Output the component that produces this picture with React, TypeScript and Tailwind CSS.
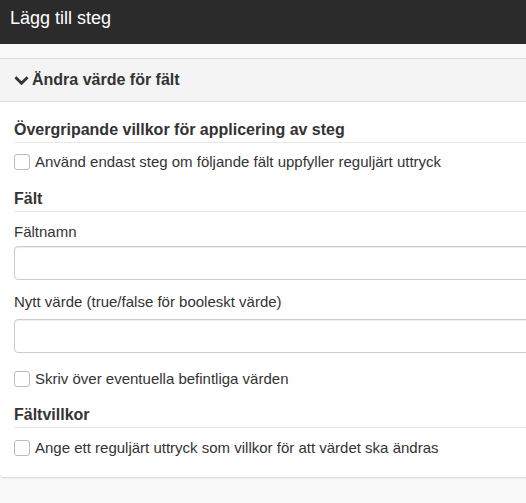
import React from "react";

function Check({ label }: { label: string }) {
  return (
    <label className="flex items-center gap-[5px] h-[20px] text-[15px] leading-[20px] text-[#333]">
      <span className="inline-block shrink-0 w-[16px] h-[16px] rounded-[3px] border border-[#bbb] bg-white" />
      <span>{label}</span>
    </label>
  );
}

function Heading({ children }: { children: React.ReactNode }) {
  return (
    <h3 className="text-[16px] leading-[18px] font-bold text-[#333] pb-[3px] border-b border-[#e8e8e8]">
      {children}
    </h3>
  );
}

export default function App() {
  return (
    <div
      className="w-[526px] h-[503px] overflow-hidden bg-[#f9f9f9]"
      style={{ fontFamily: '"Liberation Sans", Arial, sans-serif' }}
    >
      {/* Header */}
      <header className="h-[44px] bg-[#2b2b2b] px-[10px] pt-[7px]">
        <h1 className="text-[18px] leading-[22px] text-white">Lägg till steg</h1>
      </header>

      <div className="pt-[14px] w-[620px]">
        <div className="bg-white rounded-b-[4px] border-t border-[#ddd] shadow-[0_1px_2px_rgba(0,0,0,0.15)]">
          {/* Panel heading */}
          <div className="h-[43px] bg-[#f4f4f4] border-b border-[#ddd] flex items-center px-[14px] gap-[3px]">
            <svg width="15" height="15" viewBox="0 0 16 16" className="text-[#333]">
              <path d="M1.5 4.5 L8 11 L14.5 4.5" fill="none" stroke="currentColor" strokeWidth="3" />
            </svg>
            <span className="text-[16px] font-bold text-[#333]">Ändra värde för fält</span>
          </div>

          {/* Body */}
          <div className="pl-[14px] pt-[19px] pb-[19px]">
            <Heading>Övergripande villkor för applicering av steg</Heading>
            <div className="mt-[9px]">
              <Check label="Använd endast steg om följande fält uppfyller reguljärt uttryck" />
            </div>

            <div className="mt-[18px]">
              <Heading>Fält</Heading>
            </div>
            <div className="mt-[10px] text-[15px] leading-[20px] text-[#333]">Fältnamn</div>
            <input
              type="text"
              className="mt-[4px] block w-full h-[34px] rounded-[4px] border border-[#ccc] bg-white shadow-[inset_0_1px_1px_rgba(0,0,0,0.075)]"
            />
            <div className="mt-[12px] text-[15px] leading-[20px] text-[#333]">
              Nytt värde (true/false för booleskt värde)
            </div>
            <input
              type="text"
              className="mt-[7px] block w-full h-[34px] rounded-[4px] border border-[#ccc] bg-white shadow-[inset_0_1px_1px_rgba(0,0,0,0.075)]"
            />
            <div className="mt-[16px]">
              <Check label="Skriv över eventuella befintliga värden" />
            </div>

            <div className="mt-[17px]">
              <Heading>Fältvillkor</Heading>
            </div>
            <div className="mt-[10px]">
              <Check label="Ange ett reguljärt uttryck som villkor för att värdet ska ändras" />
            </div>
          </div>
        </div>
      </div>
    </div>
  );
}
